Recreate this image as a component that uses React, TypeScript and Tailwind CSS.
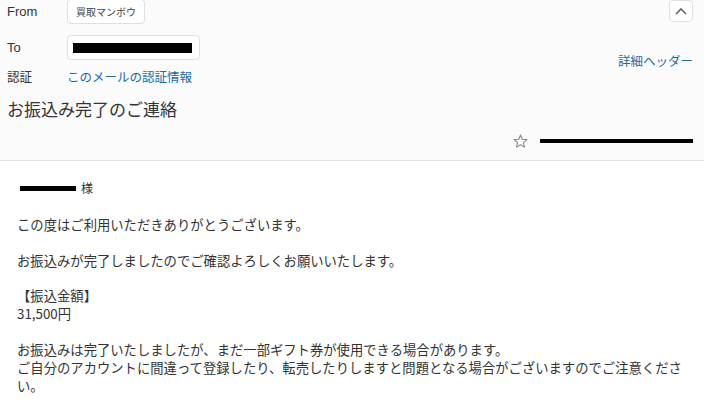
import React from "react";

const jp = { fontFamily: '"Noto Sans CJK JP", "Noto Sans", sans-serif' };
const lat = { fontFamily: '"Liberation Sans", "Noto Sans CJK JP", sans-serif' };

export default function App() {
  return (
    <div className="w-[705px] h-[420px] overflow-hidden bg-white text-[#333]" style={jp}>
      <div className="bg-[#fbfbfb] border-b border-[#e2e2e2] mr-[1px]">
        <div className="flex">
          <div className="flex-1 pl-[7px]">
            <div className="flex items-center h-[24px]">
              <div className="w-[60px] text-[13px] text-[#333]" style={lat}>From</div>
              <div className="h-[25px] -mt-[1px] px-[8px] flex items-center border border-[#e0e0e0] rounded-[4px] bg-white text-[10px] text-[#444]">
                買取マンボウ
              </div>
            </div>
            <div className="flex items-center h-[25px] mt-[11px]">
              <div className="w-[60px] text-[13px] text-[#333]" style={lat}>To</div>
              <div className="w-[133px] h-[25px] flex items-center pl-[5px] border border-[#e0e0e0] rounded-[4px] bg-white">
                <div className="w-[119px] h-[10px] bg-black" />
              </div>
            </div>
            <div className="flex items-center h-[20px] mt-[7px]">
              <div className="w-[60px] text-[12.5px] text-[#333]">認証</div>
              <div className="text-[12.5px] text-[#1a6aa8]">このメールの認証情報</div>
            </div>
          </div>
          <div className="flex flex-col items-end pr-[11px]">
            <div className="w-[24px] h-[22px] border border-[#e0e0e0] rounded-[4px] bg-white flex items-center justify-center">
              <svg width="12" height="8" viewBox="0 0 12 8" fill="none" stroke="#666" strokeWidth="1.6">
                <path d="M1 7 L6 2 L11 7" />
              </svg>
            </div>
            <div className="mt-[29px] text-[12.5px] text-[#1a6aa8] leading-[20px]">詳細ヘッダー</div>
          </div>
        </div>
        <div className="pl-[7px] mt-[10px] text-[17px] leading-[24px] text-[#333]">お振込み完了のご連絡</div>
        <div className="flex items-center justify-end h-[34px] pr-[11px] mt-[5px] pb-[4px]">
          <svg width="15" height="14" viewBox="0 0 24 23" fill="none" stroke="#888" strokeWidth="1.8" strokeLinejoin="round">
            <path d="M12 1.5 L15 8.6 L22.6 9.2 L16.8 14.2 L18.6 21.6 L12 17.6 L5.4 21.6 L7.2 14.2 L1.4 9.2 L9 8.6 Z" />
          </svg>
          <div className="ml-[12px] w-[153px] h-[4px] bg-black" />
        </div>
      </div>
      <div className="pl-[17px] pr-[17px] text-[13.33px] leading-[18px] text-[#333]">
        <div className="flex items-center mt-[20px] h-[14px]">
          <div className="ml-[3px] w-[56px] h-[5px] bg-black" />
          <span className="ml-[5px] text-[12px]">様</span>
        </div>
        <div className="mt-[21px]">この度はご利用いただきありがとうございます。</div>
        <div className="h-[17.5px]" />
        <div>お振込みが完了しましたのでご確認よろしくお願いいたします。</div>
        <div className="h-[17.5px]" />
        <div>【振込金額】</div>
        <div>31,500円</div>
        <div className="h-[17.5px]" />
        <div>お振込みは完了いたしましたが、まだ一部ギフト券が使用できる場合があります。</div>
        <div>ご自分のアカウントに間違って登録したり、転売したりしますと問題となる場合がございますのでご注意ください。</div>
      </div>
    </div>
  );
}
